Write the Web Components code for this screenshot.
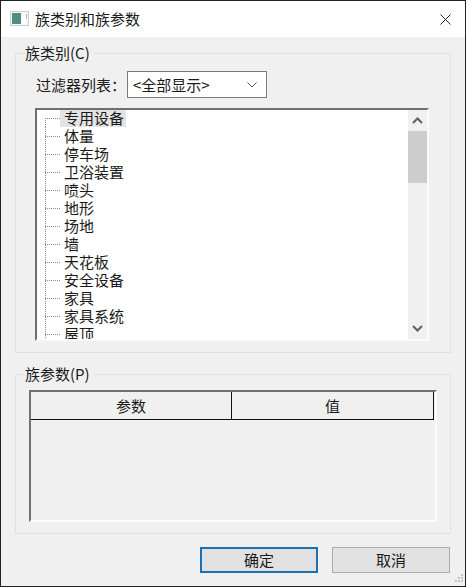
<!DOCTYPE html>
<html lang="zh"><head><meta charset="utf-8">
<style>
html,body{margin:0;padding:0;background:#f0f0f0}
body{font-family:"Noto Sans CJK SC","Liberation Sans",sans-serif;font-size:15px;color:#1a1a1a}
</style></head><body>
<family-dialog></family-dialog>
<script>
const def=(name,html)=>customElements.define(name,class extends HTMLElement{
  constructor(){super();this.attachShadow({mode:'open'}).innerHTML=html;}
});
def('dlg-titlebar',`<style>
:host{display:flex;align-items:center;height:36px;background:#fff;flex:none}
svg{display:block}
.icon{margin:-2px 6px 0 9px}
.t{flex:1;line-height:20px;white-space:nowrap}
.x{margin-right:14px}
</style>
<svg class="icon" width="19" height="15" viewBox="0 0 19 15"><rect x=".5" y=".5" width="18" height="14" fill="#f6f6f6" stroke="#cfcfcf"/><rect x="2" y="2" width="9" height="11" fill="#4f8f86"/><rect x="12" y="2" width="5" height="11" fill="#fff"/><path d="M16.500 3v5" stroke="#b5b5b5"/></svg>
<span class="t"><slot></slot></span>
<svg class="x" width="11" height="11" viewBox="0 0 11 11"><path d="M.5.5l10 10M10.5.5l-10 10" stroke="#222" stroke-width="1" fill="none"/></svg>`);
def('dlg-group',`<style>
:host{display:block;margin:0 14px}
fieldset{margin:0;min-width:0;border:1px solid #e0e0e0;border-radius:1px;padding:var(--pad)}
legend{padding:0 4px 0 0;margin-left:var(--legend-x);line-height:20px;height:20px;white-space:nowrap}
</style><fieldset><legend><slot name="legend"></slot></legend><slot></slot></fieldset>`);
def('dlg-combo',`<style>
:host{display:flex;align-items:center;box-sizing:border-box;width:140px;height:27px;background:#fff;border:1px solid #7a7a7a;padding:0 9px 0 5px}
.v{flex:1;line-height:20px;white-space:nowrap}
svg{display:block}
</style><span class="v"><slot></slot></span>
<svg width="10" height="6" viewBox="0 0 10 6"><path d="M.5.5L5 5 9.500.5" stroke="#555" fill="none"/></svg>`);
def('tree-item',`<style>
:host{display:block;height:18px;line-height:18px;padding-left:23px;white-space:nowrap;
 background:
  repeating-linear-gradient(90deg,#8c8c8c 0 1px,transparent 1px 2px) 8px 9px/15px 1px no-repeat,
  repeating-linear-gradient(180deg,#8c8c8c 0 1px,transparent 1px 2px) 8px 0/1px 18px no-repeat}
:host([first]){background:
  repeating-linear-gradient(90deg,#8c8c8c 0 1px,transparent 1px 2px) 8px 9px/15px 1px no-repeat,
  repeating-linear-gradient(180deg,#8c8c8c 0 1px,transparent 1px 2px) 8px 9px/1px 9px no-repeat}
span{display:inline-block;height:18px;padding:0 2px 0 4px}
:host([selected]) span{background:#e3e3e3}
</style><span><slot></slot></span>`);
def('dlg-scrollbar',`<style>
:host{display:flex;flex-direction:column;width:19px;flex:none;background:#f0f0f0}
.b{height:21px;display:flex;align-items:center;justify-content:center;flex:none}
.thumb{height:52px;background:#cdcdcd;flex:none}
.track{flex:1}
svg{display:block}
</style>
<div class="b"><svg width="11" height="7" viewBox="0 0 11 7"><path d="M1 6l4.500-4.500L10 6" stroke="#606060" stroke-width="2" fill="none"/></svg></div>
<div class="thumb"></div><div class="track"></div>
<div class="b"><svg width="11" height="7" viewBox="0 0 11 7"><path d="M1 1l4.500 4.500L10 1" stroke="#606060" stroke-width="2" fill="none"/></svg></div>`);
def('dlg-tree',`<style>
:host{display:flex;box-sizing:border-box;height:233px;background:#fff;border-style:solid;border-width:2px;border-color:#6f6f6f #fbfbfb #fbfbfb #6f6f6f;overflow:hidden}
.list{flex:1;min-width:0;overflow:hidden;margin-top:-1px}
</style><div class="list"><slot></slot></div><dlg-scrollbar></dlg-scrollbar>`);
def('dlg-table',`<style>
:host{display:block;box-sizing:border-box;height:132px;border-style:solid;border-width:2px;border-color:#6f6f6f #fbfbfb #fbfbfb #6f6f6f}
.h{display:grid;grid-template-columns:201px 1fr;height:28px;margin-right:1px;border-bottom:1px solid #111;border-right:1px solid #111;box-sizing:border-box}
.c{display:flex;align-items:center;justify-content:center;line-height:20px}
.c:first-child{border-right:1px solid #111}
</style><div class="h"><div class="c">参数</div><div class="c">值</div></div>`);
def('dlg-button',`<style>
:host{display:flex;align-items:center;justify-content:center;box-sizing:border-box;width:118px;height:26px;background:#e1e1e1;border:1px solid #adadad;line-height:20px}
:host([primary]){border:2px solid #1d6fb0}
</style><slot></slot>`);
def('filter-row',`<style>
:host{display:flex;align-items:center;padding-left:1px;margin-bottom:10px}
.l{width:91px;line-height:20px;white-space:nowrap}
</style><span class="l"><slot name="label"></slot></span><slot></slot>`);
def('family-dialog',`<style>
:host{display:flex;flex-direction:column;box-sizing:border-box;width:466px;height:587px;background:#f0f0f0;border:1px solid #222;overflow:hidden}
.g1{margin-top:6px;--pad:8px 21px 11px 19px;--legend-x:-10px}
.g2{margin-top:11px;--pad:6px 13px 11px 13px;--legend-x:-4px}
.f{display:flex;justify-content:flex-end;gap:14px;margin-top:13px;padding-right:15px}
.grip{display:flex;justify-content:flex-end;padding:1px 1px 0 0}
svg{display:block}
</style>
<dlg-titlebar>族类别和族参数</dlg-titlebar>
<dlg-group class="g1"><span slot="legend">族类别(C)</span>
 <filter-row><span slot="label">过滤器列表：</span><dlg-combo>&lt;全部显示&gt;</dlg-combo></filter-row>
 <dlg-tree>
  <tree-item first selected>专用设备</tree-item><tree-item>体量</tree-item><tree-item>停车场</tree-item><tree-item>卫浴装置</tree-item><tree-item>喷头</tree-item><tree-item>地形</tree-item><tree-item>场地</tree-item><tree-item>墙</tree-item><tree-item>天花板</tree-item><tree-item>安全设备</tree-item><tree-item>家具</tree-item><tree-item>家具系统</tree-item><tree-item>屋顶</tree-item>
 </dlg-tree>
</dlg-group>
<dlg-group class="g2"><span slot="legend">族参数(P)</span><dlg-table></dlg-table></dlg-group>
<div class="f"><dlg-button primary>确定</dlg-button><dlg-button>取消</dlg-button></div>
<div class="grip"><svg width="9" height="9" viewBox="0 0 9 9" fill="#c4c4c4"><rect x="6" y="0" width="2" height="2"/><rect x="3" y="3" width="2" height="2"/><rect x="6" y="3" width="2" height="2"/><rect x="0" y="6" width="2" height="2"/><rect x="3" y="6" width="2" height="2"/><rect x="6" y="6" width="2" height="2"/></svg></div>`);
</script>
</body></html>
